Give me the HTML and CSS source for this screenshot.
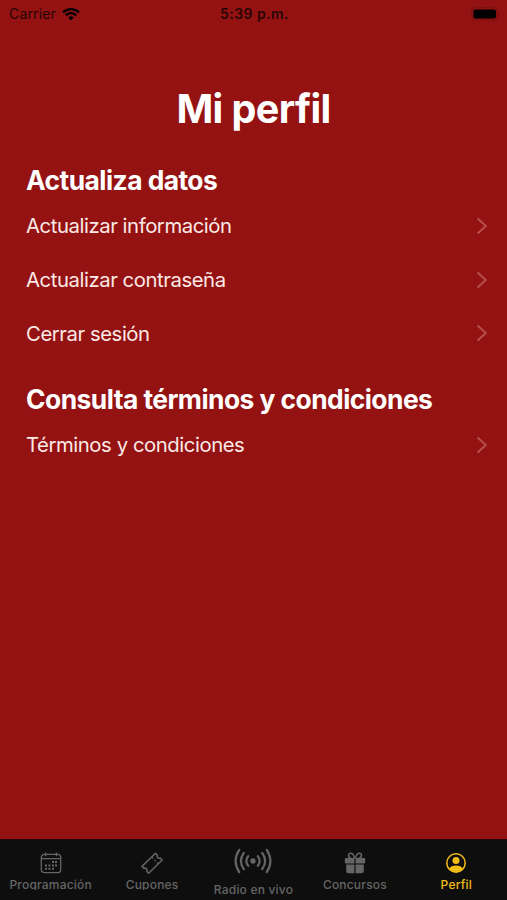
FILE: index.html
```html
<!DOCTYPE html>
<html lang="es">
<head>
    <meta charset="UTF-8">
    <meta name="viewport" content="width=device-width, initial-scale=1.0">
    <title>Mi perfil</title>
    <link rel="stylesheet" href="styles.css">
</head>
<body>
    <div class="app">
        <header class="status-bar">
            <div class="carrier">
                <span class="carrier-name">Carrier</span>
                <svg class="wifi" width="18" height="14" viewBox="0 0 18 14">
                    <path d="M1 5.3a11.5 11.5 0 0 1 16 0M3.8 8.3a7.5 7.5 0 0 1 10.4 0" fill="none" stroke="currentColor" stroke-width="2.3"/>
                    <path d="M6.2 10.5a4.2 4.2 0 0 1 5.6 0L9 13.5z" fill="currentColor"/>
                </svg>
            </div>
            <span class="time">5:39 p.m.</span>
            <svg class="battery" width="29" height="14" viewBox="0 0 29 14">
                <rect x=".7" y=".7" width="25.6" height="12.4" rx="3.8" fill="none" stroke="#7a1010" stroke-width="1"/>
                <rect x="2.4" y="2.4" width="22.6" height="9" rx="2" fill="#000"/>
                <path d="M27.3 5v4q1.4-.6 1.4-2t-1.4-2z" fill="#7a1010"/>
            </svg>
        </header>

        <main class="profile">
            <h1>Mi perfil</h1>

            <section>
                <h2>Actualiza datos</h2>
                <a class="row" href="#">
                    <span>Actualizar información</span>
                    <svg class="chevron" width="12" height="18" viewBox="0 0 12 18"><path d="M1.6 1.4 9.8 9l-8.2 7.6"/></svg>
                </a>
                <a class="row" href="#">
                    <span>Actualizar contraseña</span>
                    <svg class="chevron" width="12" height="18" viewBox="0 0 12 18"><path d="M1.6 1.4 9.8 9l-8.2 7.6"/></svg>
                </a>
                <a class="row" href="#">
                    <span>Cerrar sesión</span>
                    <svg class="chevron" width="12" height="18" viewBox="0 0 12 18"><path d="M1.6 1.4 9.8 9l-8.2 7.6"/></svg>
                </a>
            </section>

            <section>
                <h2>Consulta términos y condiciones</h2>
                <a class="row" href="#">
                    <span>Términos y condiciones</span>
                    <svg class="chevron" width="12" height="18" viewBox="0 0 12 18"><path d="M1.6 1.4 9.8 9l-8.2 7.6"/></svg>
                </a>
            </section>
        </main>

        <nav class="tab-bar">
            <a class="tab" href="#">
                <svg width="22" height="22" viewBox="0 0 22 22">
                    <g fill="none" stroke="currentColor" stroke-width="1.3">
                        <rect x="1.3" y="2.3" width="19.4" height="18.4" rx="3"/>
                        <path d="M1.3 6.6h19.4M5.6.6v3.6M16.4.6v3.6"/>
                    </g>
                    <path fill="currentColor" d="M12 9h2v2h-2zM15 9h2v2h-2zM5 12.4h2v2H5zM8.4 12.4h2v2h-2zM12 12.4h2v2h-2zM15 12.4h2v2h-2zM5 15.8h2v2H5zM8.4 15.8h2v2h-2zM12 15.8h2v2h-2z"/>
                </svg>
                <span class="tab-label cut">Programación</span>
            </a>
            <a class="tab" href="#">
                <svg width="22" height="22" viewBox="0 0 22 22">
                    <g fill="none" stroke="currentColor" stroke-width="1.5" stroke-linejoin="round">
                        <path d="M14.4 1.2 1 14.4l2 2q1.4-.7 2.4.3t.3 2.5l2 2L21.2 8l-2-2q-1.4.7-2.4-.3t-.4-2.5z"/>
                        <path d="m10.8 5.2 1.300 1.300m1.300 1.300 1.300 1.300m1.200 1.200 1.200 1.200" stroke-width="1.200"/>
                    </g>
                </svg>
                <span class="tab-label cut">Cupones</span>
            </a>
            <a class="tab tab-radio" href="#">
                <svg width="38" height="26" viewBox="0 0 38 26">
                    <circle cx="19" cy="13" r="2.7" fill="currentColor"/>
                    <g fill="none" stroke="currentColor" stroke-width="2.2" stroke-linecap="round">
                        <path d="M14.2 8.2q-3.7 4.800 0 9.600M9.800 4.800q-5.800 8.200 0 16.400M5.200 1.800q-7.200 11.200 0 22.400"/>
                        <path d="M23.800 8.200q3.700 4.800 0 9.600M28.200 4.800q5.800 8.200 0 16.400M32.800 1.800q7.200 11.200 0 22.400"/>
                    </g>
                </svg>
                <span class="tab-label">Radio en vivo</span>
            </a>
            <a class="tab" href="#">
                <svg width="22" height="22" viewBox="0 0 22 22">
                    <path fill="none" stroke="currentColor" stroke-width="1.5" d="M10.6 6.4C9.8 3 8.7 1.2 7 1.2 5.4 1.2 4.5 2.2 4.5 3.5c0 1.5 1.2 2.5 2.8 2.9M11.4 6.4C12.2 3 13.3 1.2 15 1.2c1.6 0 2.5 1 2.5 2.3 0 1.5-1.2 2.5-2.8 2.9"/>
                    <path fill="currentColor" d="M2 6h8.4v5.4H2Q.8 11.4.8 10.2v-3Q.8 6 2 6zM11.600 6H20q1.200 0 1.200 1.200v3q0 1.200-1.200 1.200h-8.400zM2.200 12.500h8.200v8.700H4.700q-2.500 0-2.500-2.500zM11.600 12.500h8.200v6.200q0 2.500-2.500 2.500h-5.700z"/>
                </svg>
                <span class="tab-label">Concursos</span>
            </a>
            <a class="tab active" href="#">
                <svg width="22" height="22" viewBox="0 0 22 22">
                    <circle cx="11" cy="11" r="9.2" fill="none" stroke="currentColor" stroke-width="1.5"/>
                    <circle cx="11" cy="8.5" r="3.5" fill="currentColor"/>
                    <path fill="currentColor" d="M4 16.8q2-3.200 7-3.200t7 3.200a9.200 9.200 0 0 1-14 0z"/>
                </svg>
                <span class="tab-label">Perfil</span>
            </a>
        </nav>
    </div>
</body>
</html>
```

FILE: styles.css
```css
* {
    box-sizing: border-box;
}

body {
    margin: 0;
    background-color: #941212;
    font-family: Inter, "Liberation Sans", sans-serif;
}

.app {
    height: 100vh;
    display: flex;
    flex-direction: column;
    overflow: hidden;
}

a {
    color: inherit;
    text-decoration: none;
}

svg {
    display: block;
    flex: none;
}

.status-bar {
    height: 27px;
    padding: 0 7px 0 9px;
    display: grid;
    grid-template-columns: 1fr auto 1fr;
    align-items: center;
    color: #270505;
    font-size: 14px;
}

.carrier {
    display: flex;
    align-items: center;
    gap: 6px;
}

.carrier-name {
    letter-spacing: 0.15px;
}

.wifi {
    color: #000;
}

.time {
    font-weight: 600;
    letter-spacing: 0.45px;
}

.battery {
    justify-self: end;
}

.profile {
    flex: 1;
    padding: 57px 19px 0 26px;
    color: #fff;
}

h1 {
    margin: 0 0 31px;
    padding-right: 7px;
    font-size: 39.5px;
    line-height: 50px;
    font-weight: 700;
    letter-spacing: -0.6px;
    text-align: center;
}

h2 {
    margin: 0;
    font-size: 26.4px;
    line-height: 30px;
    font-weight: 700;
    letter-spacing: -0.54px;
    white-space: nowrap;
}

section + section {
    margin-top: 28px;
}

.row {
    height: 53.7px;
    padding-top: 8px;
    display: flex;
    justify-content: space-between;
    align-items: center;
    font-size: 20.3px;
    letter-spacing: -0.43px;
    color: #fbe9e6;
}

.chevron {
    fill: none;
    stroke: #b94f4a;
    stroke-width: 2;
}

.tab-bar {
    height: 61px;
    display: grid;
    grid-template-columns: repeat(5, 1fr);
    background-color: #0e0e0e;
    border-top: 1px solid #2b0808;
    color: #656565;
}

.tab {
    padding-top: 12px;
    display: flex;
    flex-direction: column;
    align-items: center;
}

.tab-label {
    margin-top: 2px;
    font-size: 12px;
    line-height: 18px;
    font-weight: 500;
    letter-spacing: 0.2px;
    white-space: nowrap;
}

/* descenders are cut just under the baseline */
.cut {
    height: 14px;
    overflow: hidden;
}

.tab-radio {
    padding-top: 8px;
}

.tab-radio .tab-label {
    margin-top: 7px;
}

.active {
    color: #f3bd18;
}
```
